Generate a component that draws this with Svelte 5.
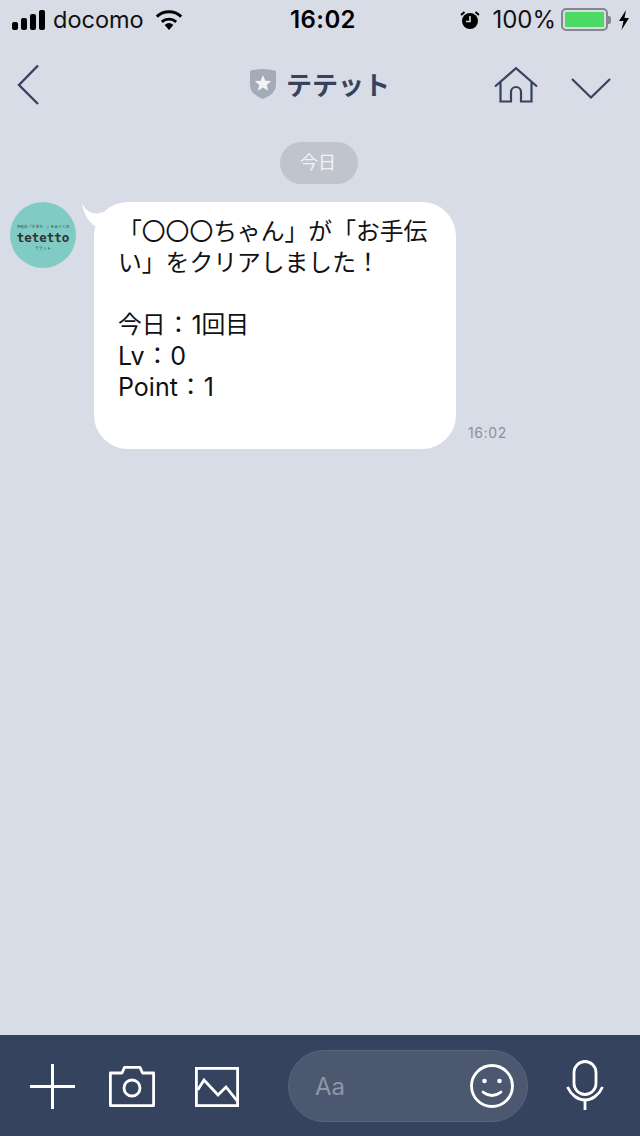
<script>
  const lines = [
    [['「〇〇〇ちゃん」が「お手伝', '']],
    [['い」をクリアしました！', '']],
    [],
    [['今日', ''], ['：', 'colon'], ['1', 'lat'], ['回目', '']],
    [['Lv', 'lat'], ['：', 'colon'], ['0', 'lat']],
    [['Point', 'lat'], ['：', 'colon'], ['1', 'lat']]
  ];
</script>

<div class="screen">
  <div class="status">
    <div class="st-left">
      <div class="signal"><i class="b1"></i><i class="b2"></i><i class="b3"></i><i class="b4"></i></div>
      <span class="carrier">docomo</span>
      <svg class="wifi" width="28" height="20" viewBox="0 0 28 20"><path d="M14 20 L9.6 14.9 A7 7 0 0 1 18.4 14.9 Z" fill="#000"/><path d="M6.8 11.8 A11 11 0 0 1 21.2 11.8" fill="none" stroke="#000" stroke-width="2.9"/><path d="M1.8 6.6 A18 18 0 0 1 26.2 6.6" fill="none" stroke="#000" stroke-width="3"/></svg>
    </div>
    <div class="time">16:02</div>
    <div class="st-right">
      <svg class="alarm" width="20" height="20" viewBox="0 0 20 20"><circle cx="10" cy="11" r="8" fill="#000"/><path d="M10 6v5.5H6" fill="none" stroke="#d8dce6" stroke-width="1.6"/><path d="M1 5 L4.5 2 M19 5 L15.5 2" stroke="#000" stroke-width="2"/></svg>
      <span class="pct">100%</span>
      <div class="batt"><div class="fill"></div></div>
      <div class="nub"></div>
      <svg class="bolt" width="12" height="20" viewBox="0 0 12 20"><path d="M8 0 L1 11 H5.5 L3.5 20 L11 8 H6.5 Z" fill="#000"/></svg>
    </div>
  </div>

  <header class="nav">
    <svg class="back" width="24" height="42" viewBox="0 0 24 42"><path d="M21 1.500 L2 21 L21 40" fill="none" stroke="#36435f" stroke-width="2.400"/></svg>
    <div class="title">
      <svg width="28" height="32" viewBox="0 0 28 32"><path d="M1 3 Q14 -1 27 3 V17 Q27 26 14 31 Q1 26 1 17 Z" fill="#a4abb8"/><path d="M14 7 L16.300 12.700 L22.300 13 L17.700 16.900 L19.200 22.800 L14 19.500 L8.800 22.800 L10.300 16.900 L5.700 13 L11.700 12.700 Z" fill="#f2f3f6"/></svg>
      <span>テテット</span>
    </div>
    <div class="nav-right">
      <svg width="44" height="36" viewBox="0 0 44 36"><path d="M1 19.500 L22 1.200 L43 19.500 M6.500 15 V34.500 H17 V25 A5 5 0 0 1 27 25 V34.500 H37.500 V15" fill="none" stroke="#36435f" stroke-width="2.200"/></svg>
      <svg class="chev" width="40" height="21" viewBox="0 0 40 21"><path d="M1 1 L20 19.500 L39 1" fill="none" stroke="#36435f" stroke-width="2.200"/></svg>
    </div>
  </header>

  <main class="chat">
    <div class="date">今日</div>
    <div class="msg">
      <div class="avatar">
        <span class="a-top">予約の「すきだ／」をめぐくの</span>
        <span class="a-logo">tetetto</span>
        <span class="a-sub">テテット</span>
      </div>
      <div class="bubble-wrap">
        <svg class="tail" width="36" height="26" viewBox="0 0 36 26"><path d="M0 0 C3 9 10 13 18 11 L36 6 V26 H18 C8 24 1 12 0 0 Z" fill="#fff"/></svg>
        <div class="bubble">
          {#each lines as l}
            <div class="line">{#each l as [t, kind]}<span class={kind}>{t}</span>{/each}</div>
          {/each}
        </div>
      </div>
      <div class="stamp">16:02</div>
    </div>
  </main>

  <footer class="bar">
    <svg class="plus" width="45" height="45" viewBox="0 0 45 45"><path d="M0 22.500 H45 M22.500 0 V45" stroke="#fff" stroke-width="3"/></svg>
    <svg class="cam" width="46" height="41" viewBox="0 0 46 41"><path d="M1.400 7 H13 L15.500 1.400 H31 L33.500 7 H44.600 V39.600 H1.400 Z" fill="none" stroke="#fff" stroke-width="2.800" stroke-linejoin="round"/><circle cx="23" cy="22" r="8" fill="none" stroke="#fff" stroke-width="2.800"/></svg>
    <svg class="pic" width="44" height="40" viewBox="0 0 44 40"><rect x="1.400" y="1.400" width="41.200" height="37.200" fill="none" stroke="#fff" stroke-width="2.800"/><path d="M2.700 23 L9 13 L23 28 L31 20 L43 35" fill="none" stroke="#fff" stroke-width="2.800"/></svg>
    <div class="input">
      <span class="aa">Aa</span>
      <svg width="44" height="44" viewBox="0 0 44 44"><circle cx="22" cy="22" r="20.500" fill="none" stroke="#fff" stroke-width="2.800"/><circle cx="14.500" cy="17" r="2.300" fill="#fff"/><circle cx="29.500" cy="17" r="2.300" fill="#fff"/><path d="M13 28 Q22 35 31 28" fill="none" stroke="#fff" stroke-width="2.800" stroke-linecap="round"/></svg>
    </div>
    <svg class="mic" width="38" height="50" viewBox="0 0 38 50"><rect x="8" y="1.500" width="22" height="33" rx="11" fill="none" stroke="#fff" stroke-width="2.800"/><path d="M1.500 27 C5 35 12 40 19 40 C26 40 33 35 36.500 27 M19 40 V50" fill="none" stroke="#fff" stroke-width="2.800"/></svg>
  </footer>
</div>

<style>
  :global(body) { margin: 0; }
  .screen { width: 640px; height: 1136px; background: #d8dce6; display: flex; flex-direction: column; font-family: "Inter", "Liberation Sans", "Noto Sans CJK JP", sans-serif; overflow: hidden; }
  .status { height: 39px; padding: 0 10px 0 12px; display: grid; grid-template-columns: 1fr auto 1fr; align-items: center; color: #000; }
  .st-left { display: flex; align-items: center; }
  .signal { display: flex; align-items: flex-end; gap: 3px; height: 20px; }
  .signal i { display: block; width: 6px; background: #000; border-radius: 2px; }
  .b1 { height: 8px; } .b2 { height: 12px; } .b3 { height: 16px; } .b4 { height: 20px; }
  .carrier { font-size: 23.500px; margin-left: 8px; color: #111; }
  .wifi { margin-left: 11px; }
  .time { font-size: 24px; font-weight: 600; letter-spacing: .4px; margin-left: 4px; }
  .st-right { display: flex; align-items: center; justify-content: flex-end; }
  .alarm { margin-right: 12px; }
  .pct { font-size: 24px; margin-right: 5px; color: #111; }
  .batt { width: 47px; height: 23px; box-sizing: border-box; border: 2px solid #85888f; border-radius: 5px; padding: 2px; }
  .fill { height: 100%; background: #4cd964; border-radius: 1px; }
  .nub { width: 3px; height: 8px; background: #85888f; border-radius: 0 2px 2px 0; margin-right: 7px; }
  .nav { height: 91px; position: relative; display: flex; align-items: center; justify-content: space-between; padding: 0 29px 0 17px; }
  .title { position: absolute; left: 249px; top: 29px; display: flex; align-items: center; gap: 9px; font-size: 26px; font-weight: 700; color: #36435f; font-family: "Noto Sans CJK JP", sans-serif; line-height: 32px; }
  .nav-right { display: flex; align-items: center; gap: 33px; }
  .chev { margin-top: 7px; }
  .chat { flex: 1; display: flex; flex-direction: column; padding-top: 12px; }
  .date { align-self: center; margin-right: 2px; width: 78px; height: 42px; box-sizing: border-box; padding: 0 2px 4px 0; border-radius: 21px; background: #c0c4cc; color: #f2f3f6; font-size: 18px; font-family: "Noto Sans CJK JP", sans-serif; display: flex; align-items: center; justify-content: center; }
  .msg { display: flex; align-items: flex-start; margin-top: 18px; padding-left: 10px; }
  .avatar { width: 66px; height: 66px; box-sizing: border-box; padding-top: 4px; border-radius: 50%; background: #80cbc4; display: flex; flex-direction: column; align-items: center; justify-content: center; color: #333; }
  .a-top { font-size: 3.800px; line-height: 6px; white-space: nowrap; font-family: "Noto Sans CJK JP", sans-serif; }
  .a-logo { font-size: 12.500px; line-height: 15px; font-weight: 700; font-family: "DejaVu Sans Mono", monospace; }
  .a-sub { font-size: 4px; line-height: 6px; font-family: "Noto Sans CJK JP", sans-serif; }
  .bubble-wrap { position: relative; margin-left: 18px; }
  .tail { position: absolute; left: -12px; top: 0; }
  .bubble { position: relative; width: 362px; height: 247px; box-sizing: border-box; background: #fff; border-radius: 34px; padding: 12px 24px 0; font-size: 23.800px; line-height: 31px; color: #111; font-family: "Noto Sans CJK JP", sans-serif; }
  .line { height: 31px; white-space: nowrap; }
  .lat { font-family: "Inter", sans-serif; font-size: 25px; position: relative; top: 1px; }
  .colon { padding: 0 1px; }
  .stamp { align-self: flex-end; margin: 0 0 8px 12px; font-size: 14px; color: #8b919e; letter-spacing: .6px; }
  .bar { height: 101px; box-sizing: border-box; background: #36435f; display: flex; align-items: center; padding: 1px 0 0 30px; }
  .cam { margin-left: 34px; }
  .pic { margin-left: 40px; margin-top: 1px; }
  .input { margin-left: 49px; width: 240px; height: 72px; box-sizing: border-box; border-radius: 36px; background: #4c5870; border: 1px solid #5a657c; display: flex; align-items: center; justify-content: space-between; padding: 0 13px 0 26px; }
  .aa { font-size: 24px; color: #8f97a6; }
  .mic { margin-left: 38px; margin-top: -2px; }
</style>
